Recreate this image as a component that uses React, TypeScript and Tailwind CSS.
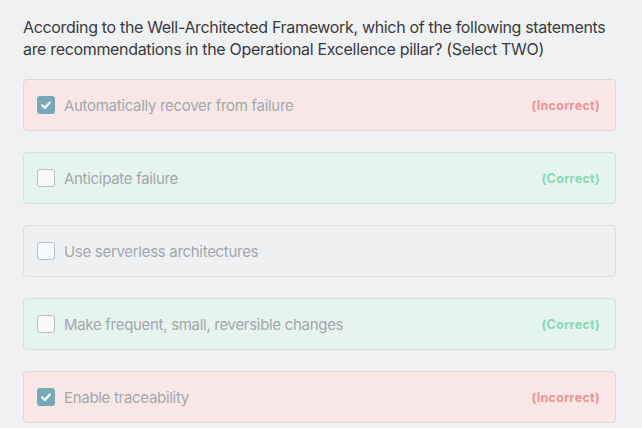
import React from "react";

type Opt = { text: string; checked: boolean; status: "correct" | "incorrect" | "none" };

const options: Opt[] = [
  { text: "Automatically recover from failure", checked: true, status: "incorrect" },
  { text: "Anticipate failure", checked: false, status: "correct" },
  { text: "Use serverless architectures", checked: false, status: "none" },
  { text: "Make frequent, small, reversible changes", checked: false, status: "correct" },
  { text: "Enable traceability", checked: true, status: "incorrect" },
];

function Check({ checked }: { checked: boolean }) {
  if (checked) {
    return (
      <div className="w-[18px] h-[18px] rounded-[3px] bg-[#77aab6] flex items-center justify-center shrink-0">
        <svg width="12" height="12" viewBox="0 0 12 12">
          <path d="M2.2 6.3 L4.9 8.9 L9.8 3.6" fill="none" stroke="white" strokeWidth="2.2" strokeLinecap="round" strokeLinejoin="round" />
        </svg>
      </div>
    );
  }
  return <div className="w-[18px] h-[18px] rounded-[3px] border border-[#b9c0c8] bg-[#f7f9fa] shrink-0" />;
}

export default function App() {
  return (
    <div
      className="w-[642px] h-[428px] overflow-hidden bg-[#f0f1f3]"
      style={{ fontFamily: "Inter, 'Noto Sans', sans-serif" }}
    >
      <div className="px-[23px] pt-[16px]">
        <p className="text-[16px] leading-[22px] text-[#3a3b3d] tracking-[-0.33px] w-[600px]">
          According to the Well-Architected Framework, which of the following statements are recommendations in the Operational Excellence pillar? (Select TWO)
        </p>
        <div className="mt-[19px] flex flex-col gap-[21px] w-[593px]">
          {options.map((o) => (
            <div
              key={o.text}
              className={
                "h-[52px] rounded-[4px] border flex items-center pl-[13px] pr-[15px] " +
                (o.status === "incorrect"
                  ? "bg-[#f9e7e8] border-[#e2d5d6]"
                  : o.status === "correct"
                  ? "bg-[#e5f4ee] border-[#d3e2dc]"
                  : "bg-[#eff0f2] border-[#dcdee1]")
              }
            >
              <Check checked={o.checked} />
              <span className="ml-[9px] pt-[2px] text-[15px] text-[#a3a7ac] flex-1 tracking-[-0.3px]">{o.text}</span>
              {o.status === "incorrect" && (
                <span className="pt-[2px] text-[12.5px] font-bold text-[#ef9294] tracking-[0.3px]">(Incorrect)</span>
              )}
              {o.status === "correct" && (
                <span className="pt-[2px] text-[12.5px] font-bold text-[#8ad8b4] tracking-[0.3px]">(Correct)</span>
              )}
            </div>
          ))}
        </div>
      </div>
    </div>
  );
}
